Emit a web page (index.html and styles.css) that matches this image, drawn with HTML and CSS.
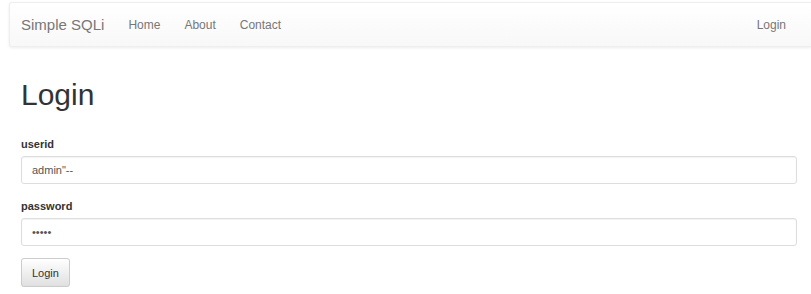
FILE: index.html
```html
<!DOCTYPE html>
<html lang="en">
<head>
    <meta charset="UTF-8">
    <title>Simple SQLi</title>
    <link rel="stylesheet" href="styles.css">
</head>
<body>
    <nav class="navbar">
        <a class="brand" href="#">Simple SQLi</a>
        <ul class="nav">
            <li><a href="#">Home</a></li>
            <li><a href="#">About</a></li>
            <li><a href="#">Contact</a></li>
        </ul>
        <ul class="nav nav-right">
            <li><a href="#">Login</a></li>
        </ul>
    </nav>
    <div class="container">
        <h1>Login</h1>
        <form>
            <div class="form-group">
                <label for="userid">userid</label>
                <input type="text" id="userid" class="form-control" value="admin&quot;--">
            </div>
            <div class="form-group">
                <label for="password">password</label>
                <input type="password" id="password" class="form-control" value="admin">
            </div>
            <button type="button" class="btn">Login</button>
        </form>
    </div>
</body>
</html>
```

FILE: styles.css
```css
body {
    font-family: "Liberation Sans", Arial, sans-serif;
    font-size: 11px;
    color: #333;
    background-color: #fff;
    margin: 0;
    padding: 2px 0 0 9px;
}
.navbar {
    display: flex;
    align-items: center;
    height: 43px;
    background-image: linear-gradient(to bottom, #fff 0, #f8f8f8 100%);
    border: 1px solid #eee;
    border-right: none;
    border-radius: 3px 0 0 3px;
    box-shadow: 0 1px 3px rgba(0, 0, 0, 0.08);
}
.brand {
    font-size: 15px;
    color: #777;
    text-decoration: none;
    padding: 0 12px 0 11px;
}
.nav {
    display: flex;
    list-style: none;
    margin: 0;
    padding: 0;
}
.nav a {
    display: block;
    font-size: 12px;
    color: #777;
    text-decoration: none;
    padding: 0 12px;
}
.nav-right {
    margin-left: auto;
    padding-right: 13px;
}
.container {
    padding: 0 14px 0 12px;
}
h1 {
    font-size: 30px;
    font-weight: 500;
    margin: 31px 0 27px;
    line-height: 1.1;
}
.form-group {
    margin-bottom: 16px;
}
.form-group:last-of-type {
    margin-bottom: 12px;
}
label {
    display: block;
    font-weight: bold;
    margin-bottom: 6px;
}
.form-control {
    display: block;
    box-sizing: border-box;
    width: 100%;
    height: 28px;
    padding: 4px 10px;
    font-family: inherit;
    font-size: 11px;
    color: #555;
    border: 1px solid #ddd;
    border-radius: 3px;
    box-shadow: inset 0 1px 1px rgba(0, 0, 0, 0.05);
}
.btn {
    height: 29px;
    padding: 4px 10px;
    font-family: inherit;
    font-size: 11px;
    color: #333;
    background-image: linear-gradient(to bottom, #fff 0, #e0e0e0 100%);
    border: 1px solid #ccc;
    border-radius: 3px;
    box-shadow: 0 1px 1px rgba(0, 0, 0, 0.05);
}
```
